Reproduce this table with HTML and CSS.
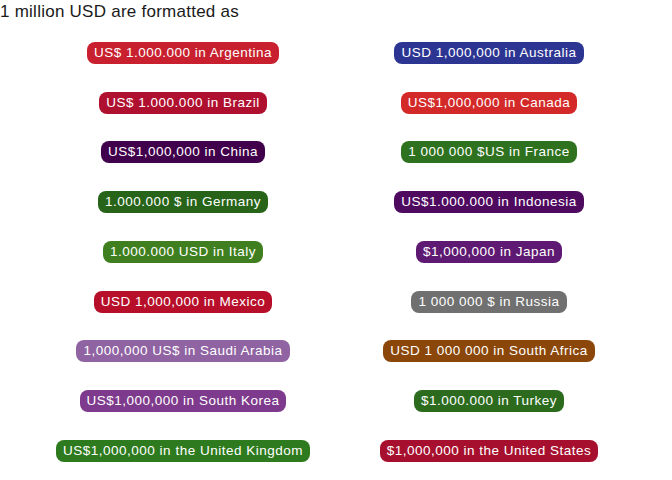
FILE: index.html
```html
<!DOCTYPE html>
<html>
<head>
<meta charset="utf-8">
<link rel="stylesheet" href="styles.css">
</head>
<body>
<div class="title">1 million USD are formatted as</div>
<div class="grid">
  <div class="cell"><span class="pill ar">US$ 1.000.000 in Argentina</span></div>
  <div class="cell"><span class="pill au">USD 1,000,000 in Australia</span></div>
  <div class="cell"><span class="pill br">US$ 1.000.000 in Brazil</span></div>
  <div class="cell"><span class="pill ca">US$1,000,000 in Canada</span></div>
  <div class="cell"><span class="pill cn">US$1,000,000 in China</span></div>
  <div class="cell"><span class="pill fr">1 000 000 $US in France</span></div>
  <div class="cell"><span class="pill de">1.000.000 $ in Germany</span></div>
  <div class="cell"><span class="pill id">US$1.000.000 in Indonesia</span></div>
  <div class="cell"><span class="pill it">1.000.000 USD in Italy</span></div>
  <div class="cell"><span class="pill jp">$1,000,000 in Japan</span></div>
  <div class="cell"><span class="pill mx">USD 1,000,000 in Mexico</span></div>
  <div class="cell"><span class="pill ru">1 000 000 $ in Russia</span></div>
  <div class="cell"><span class="pill sa">1,000,000 US$ in Saudi Arabia</span></div>
  <div class="cell"><span class="pill za">USD 1 000 000 in South Africa</span></div>
  <div class="cell"><span class="pill kr">US$1,000,000 in South Korea</span></div>
  <div class="cell"><span class="pill tr">$1.000.000 in Turkey</span></div>
  <div class="cell"><span class="pill uk">US$1,000,000 in the United Kingdom</span></div>
  <div class="cell"><span class="pill us">$1,000,000 in the United States</span></div>
</div>
</body>
</html>
```
FILE: styles.css
```css
html, body {
  margin: 0;
  padding: 0;
  background: #ffffff;
}
body {
  width: 672px;
  height: 480px;
  font-family: "Liberation Sans", Arial, sans-serif;
  overflow: hidden;
}
.title {
  font-size: 17px;
  line-height: 18px;
  padding-top: 3px;
  letter-spacing: 0.25px;
  color: #1a1a1a;
}
.grid {
  margin-top: 7px;
  padding-left: 30px;
  display: grid;
  grid-template-columns: 306px 306px;
  grid-auto-rows: 49.75px;
}
.cell {
  display: flex;
  align-items: center;
  justify-content: center;
}
.pill {
  display: inline-block;
  height: 22px;
  line-height: 22px;
  padding: 0 7px;
  border-radius: 8px;
  color: #ffffff;
  font-size: 13.5px;
  letter-spacing: 0.5px;
  white-space: nowrap;
}
.ar { background: #c8202e; }
.au { background: #2d3593; }
.br { background: #b0102f; }
.ca { background: #d32a29; }
.cn { background: #40004b; }
.fr { background: #2e7220; }
.de { background: #276419; }
.id { background: #4e0a5f; }
.it { background: #3f7f1f; }
.jp { background: #5e1a72; }
.mx { background: #b70f2a; }
.ru { background: #707070; }
.sa { background: #9063a3; }
.za { background: #8a4709; }
.kr { background: #7e3a8c; }
.tr { background: #2c6b1e; }
.uk { background: #2e7a1e; }
.us { background: #a6102e; }
```
